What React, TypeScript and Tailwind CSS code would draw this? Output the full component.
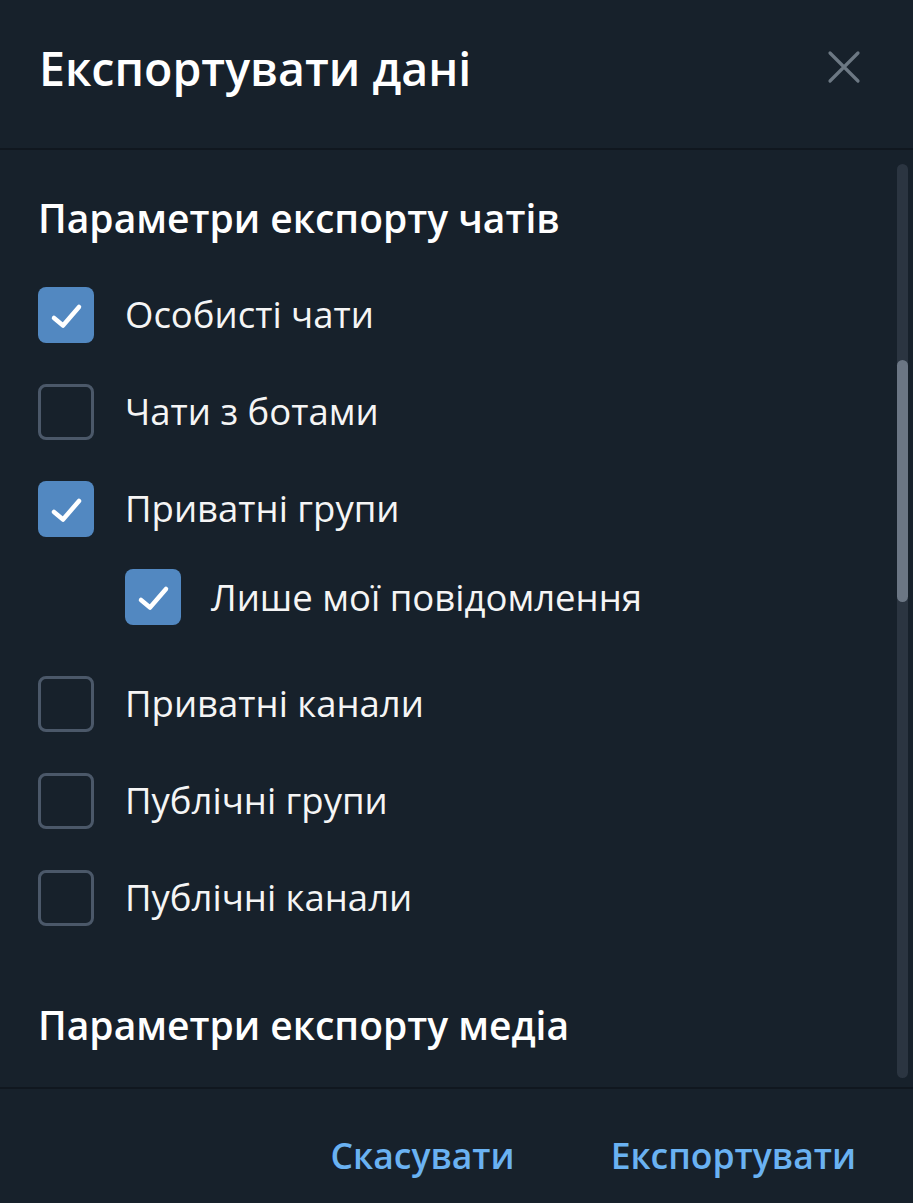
import React from "react";

type Item = { label: string; checked: boolean; sub?: boolean };

const items: Item[] = [
  { label: "Особисті чати", checked: true },
  { label: "Чати з ботами", checked: false },
  { label: "Приватні групи", checked: true },
  { label: "Лише мої повідомлення", checked: true, sub: true },
  { label: "Приватні канали", checked: false },
  { label: "Публічні групи", checked: false },
  { label: "Публічні канали", checked: false },
];

function Box({ checked }: { checked: boolean }) {
  if (checked) {
    return (
      <div className="w-[56px] h-[56px] rounded-[8px] bg-[#5288c1] flex items-center justify-center shrink-0">
        <svg width="56" height="56" viewBox="0 0 56 56" fill="none">
          <path d="M16 31 L25 38.5 L41 20" stroke="#ffffff" strokeWidth="4.5" strokeLinecap="round" strokeLinejoin="round" />
        </svg>
      </div>
    );
  }
  return <div className="w-[56px] h-[56px] rounded-[8px] border-[3px] border-[#4b5869] shrink-0" />;
}

export default function App() {
  return (
    <div className="w-[913px] h-[1203px] bg-[#17212b] flex flex-col text-white overflow-hidden" style={{ fontFamily: '"Open Sans", "Noto Sans", sans-serif' }}>
      <header className="h-[150px] shrink-0 flex items-center justify-between pl-[39px] pr-[52px] border-b-2 border-[#10171f]">
        <h1 className="text-[46.5px] font-semibold leading-none -mt-[12px]">Експортувати дані</h1>
        <svg width="34" height="34" viewBox="0 0 34 34" fill="none" className="-mt-[14px]">
          <path d="M3 3 L31 31 M31 3 L3 31" stroke="#6c7883" strokeWidth="3.2" strokeLinecap="round" />
        </svg>
      </header>

      <main className="relative flex-1 min-h-0">
        <div className="pl-[38px]">
          <h2 className="mt-[44px] h-[48px] flex items-center text-[39px] font-semibold">Параметри експорту чатів</h2>
          <div className="mt-[24px]">
            {items.map((it) => (
              <div
                key={it.label}
                className={
                  it.sub
                    ? "h-[80px] flex items-center gap-[30px] pl-[87px] mb-[18px]"
                    : "h-[97px] flex items-center gap-[31px]"
                }
              >
                <Box checked={it.checked} />
                <span className="text-[36.5px] text-[#f5f5f5]">{it.label}</span>
              </div>
            ))}
          </div>
          <h2 className="mt-[55px] h-[48px] flex items-center text-[39px] font-semibold">Параметри експорту медіа</h2>
        </div>

        <div className="absolute right-[5px] top-[14px] bottom-[9px] w-[11px] rounded-full bg-[#2b3541]">
          <div className="absolute left-0 right-0 top-[196px] h-[242px] rounded-full bg-[#6b7684]" />
        </div>
      </main>

      <footer className="h-[116px] shrink-0 border-t-2 border-[#10171f] flex items-center justify-end gap-[96px] pr-[57px]">
        <button className="text-[35.5px] font-semibold text-[#6ab2f2] mt-[20px]">Скасувати</button>
        <button className="text-[35.5px] font-semibold text-[#6ab2f2] mt-[20px]">Експортувати</button>
      </footer>
    </div>
  );
}
